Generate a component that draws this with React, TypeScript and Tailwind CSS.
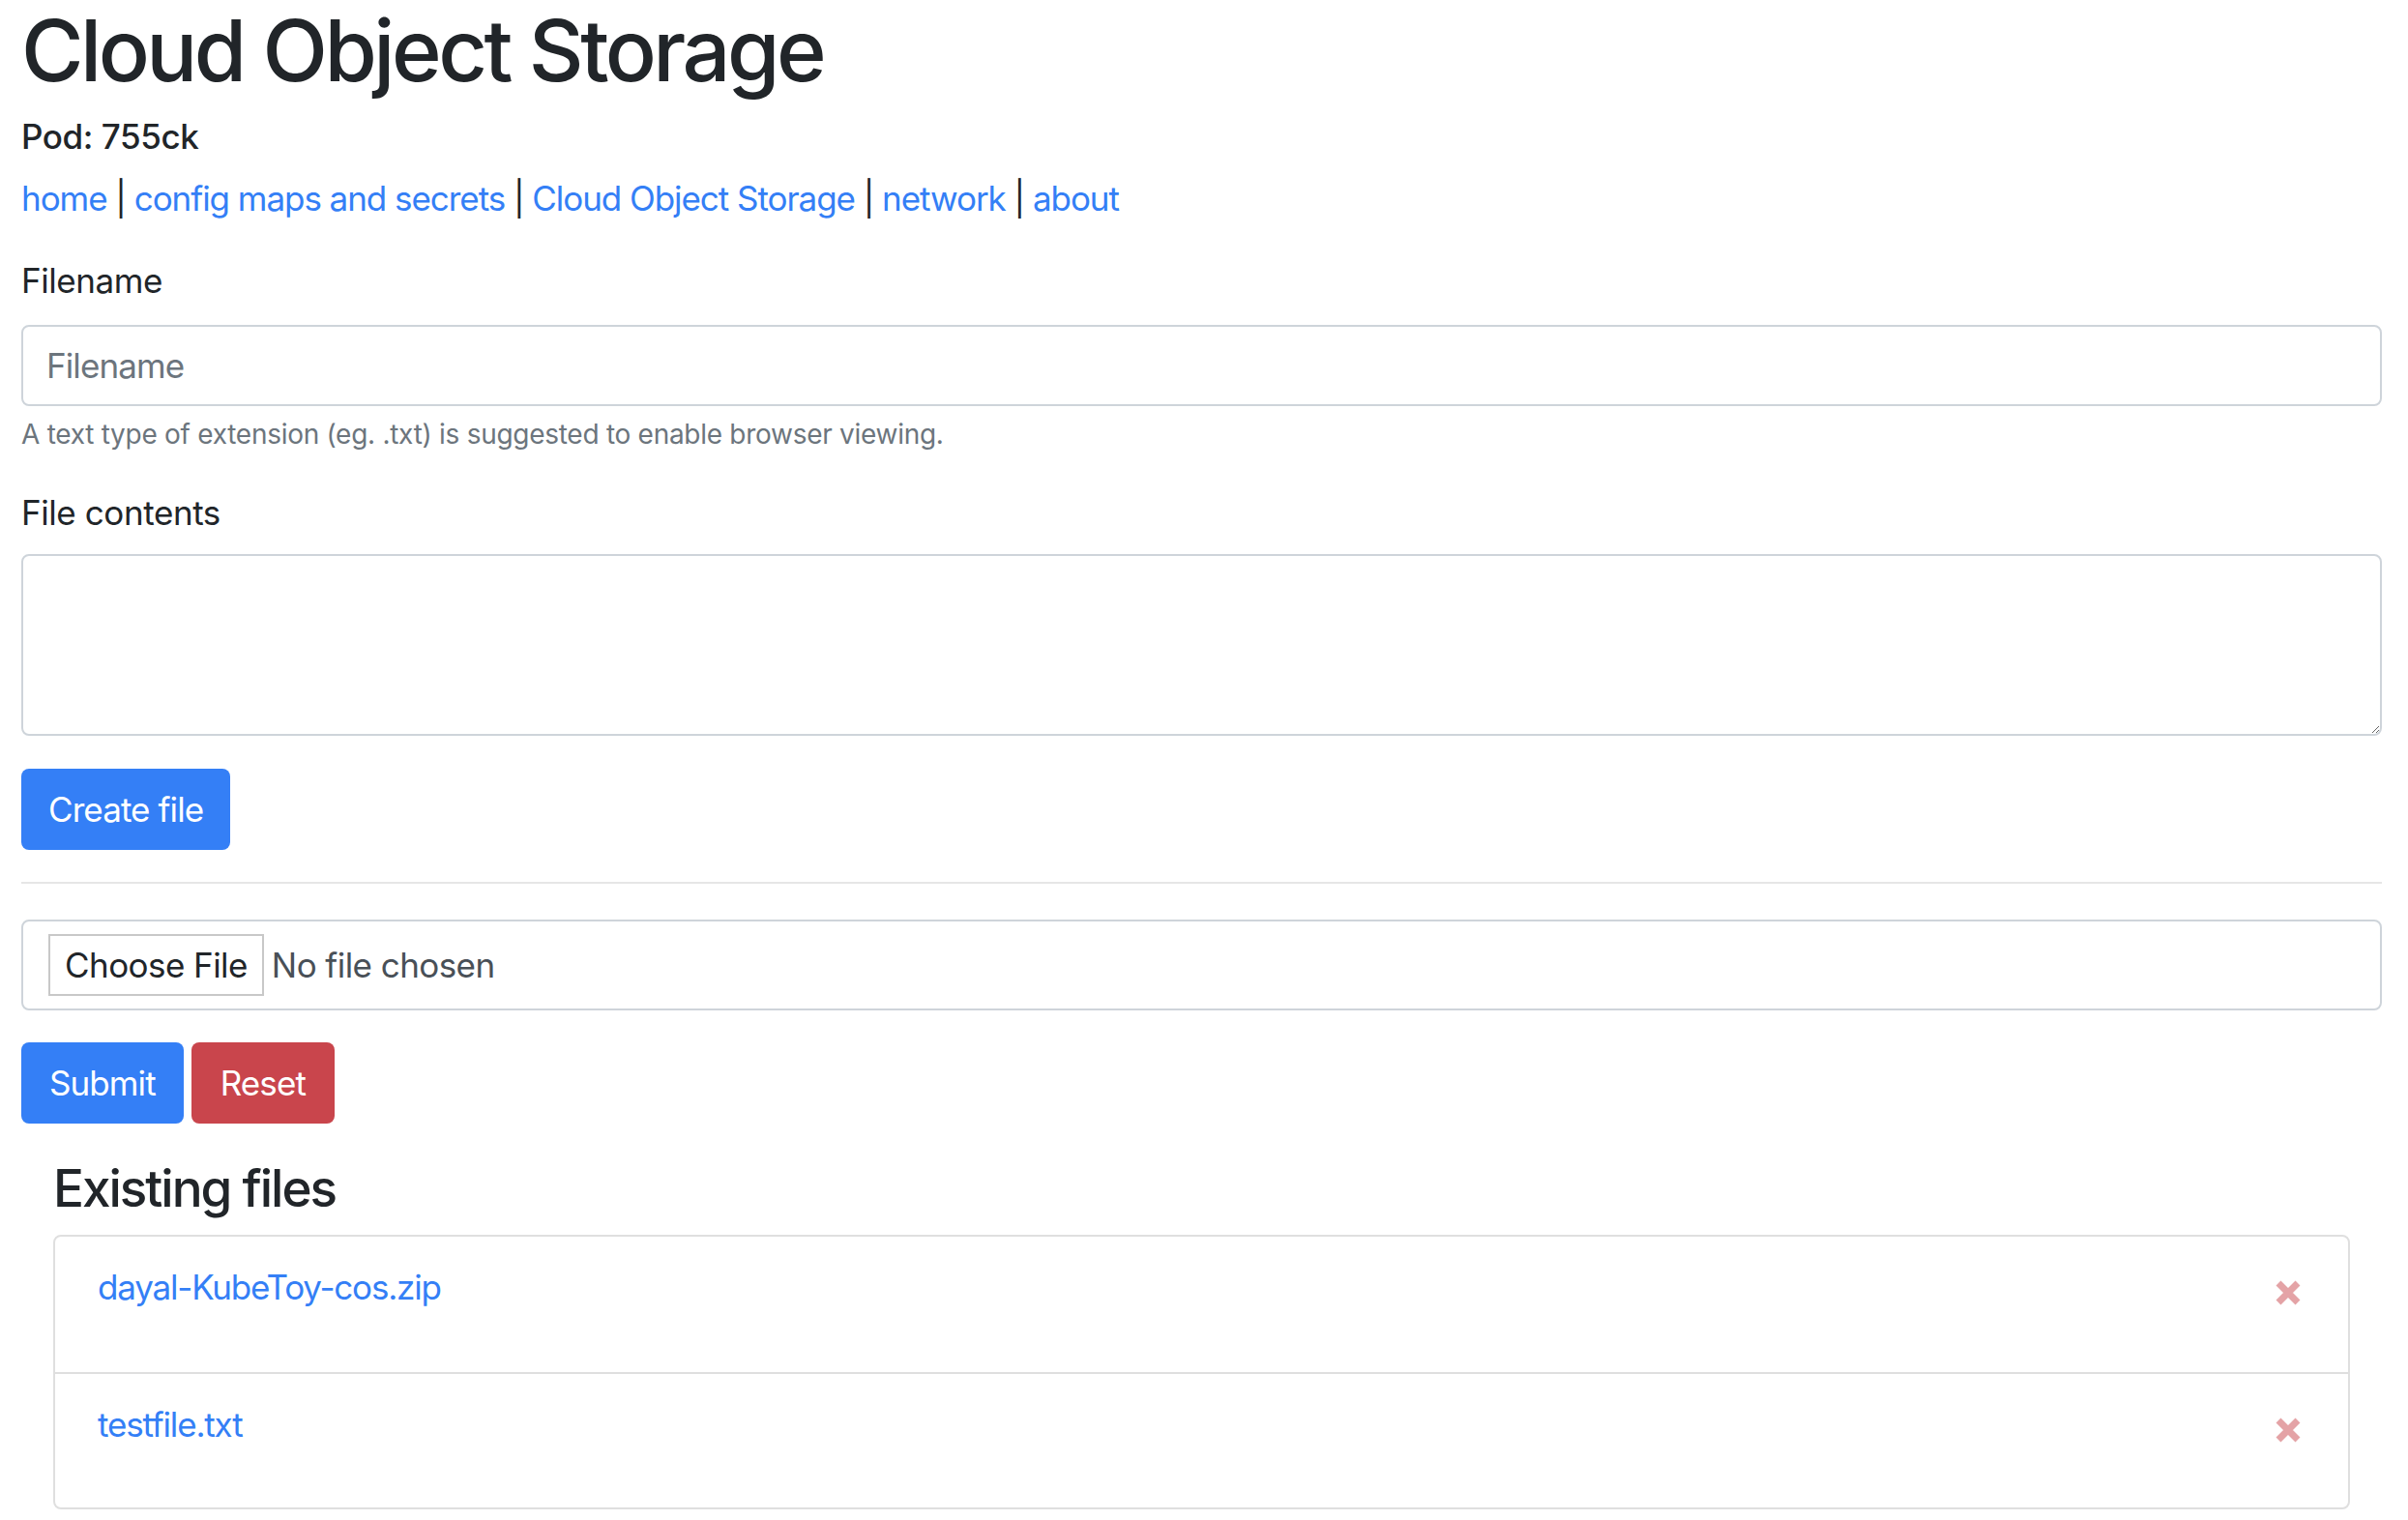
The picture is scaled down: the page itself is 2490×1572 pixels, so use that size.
import React from "react";

const files = ["dayal-KubeToy-cos.zip", "testfile.txt"];

function CrossIcon() {
  return (
    <svg width="28" height="28" viewBox="0 0 28 28" aria-hidden="true">
      <path d="M4 4 L24 24 M24 4 L4 24" stroke="#e4a3a6" strokeWidth="7" strokeLinecap="butt" />
    </svg>
  );
}

export default function App() {
  return (
    <div className="min-h-screen bg-white pl-[22px] pr-[27px] tracking-[-0.026em] text-[#212529] font-['Inter','Liberation_Sans',sans-serif]">
      <h1 className="mb-[14px] text-[88px] font-medium leading-[1.2] tracking-[-0.04em]">Cloud Object Storage</h1>
      <div className="mb-[17px] text-[35px] font-medium leading-[1.2]">Pod: 755ck</div>
      <p className="mb-[33px] text-[35px] leading-[1.5] tracking-[-0.03em]">
        <a href="#" className="text-[#347ff6]">home</a> |{" "}
        <a href="#" className="text-[#347ff6]">config maps and secrets</a> |{" "}
        <a href="#" className="text-[#347ff6]">Cloud Object Storage</a> |{" "}
        <a href="#" className="text-[#347ff6]">network</a> |{" "}
        <a href="#" className="text-[#347ff6]">about</a>
      </p>

      <form onSubmit={(e) => e.preventDefault()}>
        <label className="mb-[19px] block text-[35px] leading-[1.5]">Filename</label>
        <input
          type="text"
          placeholder="Filename"
          className="block h-[84px] w-full rounded-[8px] border-2 border-[#ced4da] px-[24px] text-[35px] tracking-[-0.026em] text-[#495057] placeholder:text-[#6c757d] outline-none"
        />
        <div className="mt-[8px] mb-[34px] text-[28px] leading-[1.5] tracking-[-0.01em] text-[#6c757d]">
          A text type of extension (eg. .txt) is suggested to enable browser viewing.
        </div>

        <label className="mb-[17px] block text-[35px] leading-[1.5]">File contents</label>
        <textarea
          rows={3}
          className="mb-[34px] block h-[188px] w-full resize-y rounded-[8px] border-2 border-[#ced4da] px-[24px] py-[12px] text-[35px] outline-none"
        />

        <button
          type="submit"
          className="h-[84px] rounded-[8px] bg-[#347ff6] px-[28px] text-[35px] leading-none tracking-[-0.026em] text-white"
        >
          Create file
        </button>
      </form>

      <hr className="mt-[33px] mb-[37px] border-t-2 border-[#e6e6e6]" />

      <div className="mb-[33px] flex h-[94px] items-center rounded-[8px] border-2 border-[#ced4da] pl-[26px] tracking-[-0.035em]">
        <span className="flex h-[64px] items-center border-2 border-[#c8c8c8] bg-white px-[15px] text-[35px] text-[#212529]">
          Choose File
        </span>
        <span className="ml-[8px] text-[35px] text-[#495057]">No file chosen</span>
      </div>

      <div className="flex gap-[8px]">
        <button className="h-[84px] rounded-[8px] bg-[#347ff6] px-[29px] text-[35px] leading-none tracking-[-0.026em] text-white">
          Submit
        </button>
        <button className="h-[84px] rounded-[8px] bg-[#c9454c] px-[30px] text-[35px] leading-none tracking-[-0.026em] text-white">
          Reset
        </button>
      </div>

      <div className="mx-[33px] mt-[36px]">
        <h4 className="mb-[15px] text-[53px] font-medium leading-[1.2] tracking-[-0.038em]">Existing files</h4>
        <ul className="rounded-[8px] border-2 border-[#dfdfdf]">
          {files.map((f, i) => (
            <li
              key={f}
              className={`flex h-[140px] items-start justify-between pl-[44px] pr-[48px] pt-[26px] ${
                i > 0 ? "border-t-2 border-[#dfdfdf]" : ""
              }`}
            >
              <a href="#" className="text-[35px] leading-[1.5] tracking-[-0.034em] text-[#347ff6]">
                {f}
              </a>
              <span className="mt-[18px]">
                <CrossIcon />
              </span>
            </li>
          ))}
        </ul>
      </div>
    </div>
  );
}
